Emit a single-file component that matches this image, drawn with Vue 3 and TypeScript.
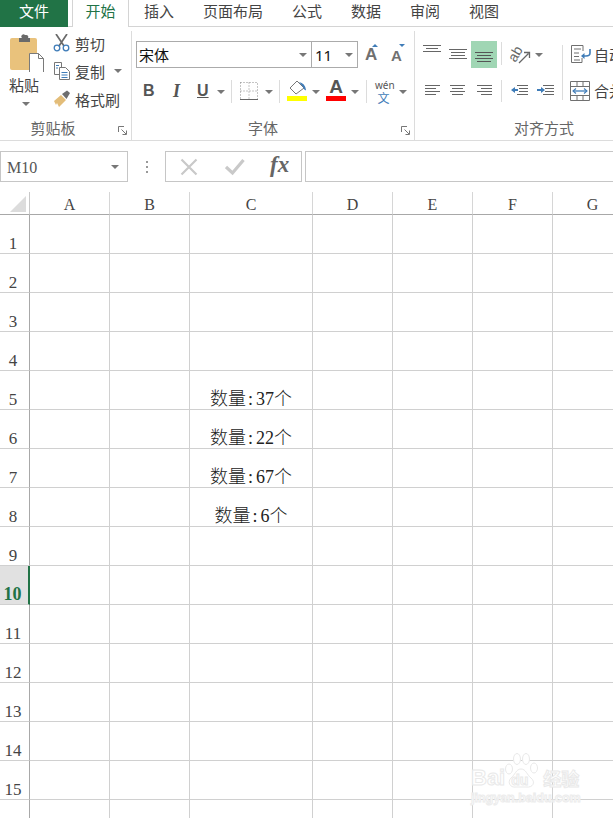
<script setup lang="ts">
const tabs: string[] = ['插入', '页面布局', '公式', '数据', '审阅', '视图']
const columns: string[] = ['A', 'B', 'C', 'D', 'E', 'F', 'G']
const rows: number[] = Array.from({ length: 16 }, (_, i) => i + 1)
const quantities: Record<number, string> = { 5: '37', 6: '22', 7: '67', 8: '6' }
</script>

<template>
  <div class="app">
    <div class="tabs">
      <div class="tab-file">文件</div>
      <div class="tab-active">开始</div>
      <div v-for="t in tabs" :key="t" class="tab">{{ t }}</div>
    </div>

    <div class="ribbon">
      <section class="group g-clip">
        <div class="body clip-body">
          <div class="paste">
            <svg width="36" height="38" viewBox="0 0 36 38">
              <rect x="1" y="4" width="27" height="32" rx="2" fill="#e9c27c" />
              <path d="M10 4 h3 a2 2 0 0 1 3 -3 h1 a2 2 0 0 1 2 3 h2 v4 h-11z" fill="#6a6a6a" />
              <path d="M20.5 19.5 h9 l5 5 v14 h-14z" fill="#fff" stroke="#7a7a7a" />
              <path d="M29.5 19.5 v5 h5" fill="none" stroke="#7a7a7a" />
            </svg>
            <div class="paste-label">粘贴</div>
            <i class="caret paste-caret"></i>
          </div>
          <div class="clip-list">
            <div class="clip-row">
              <svg width="18" height="18" viewBox="0 0 18 18">
                <path d="M3 0 L11 12 M14 0 L6 12" stroke="#6a6a6a" stroke-width="1.7" fill="none" />
                <circle cx="4" cy="14" r="2.8" fill="none" stroke="#3f7cb8" stroke-width="1.3" />
                <circle cx="13" cy="14" r="2.8" fill="none" stroke="#3f7cb8" stroke-width="1.3" />
              </svg>
              <span>剪切</span>
            </div>
            <div class="clip-row">
              <svg width="18" height="18" viewBox="0 0 18 18">
                <path d="M1.500 .5 h7 v12 h-7z" fill="#fff" stroke="#777" />
                <path d="M6.500 5.500 h6 l4 4 v8 h-10z" fill="#fff" stroke="#777" />
                <path d="M3 3.500 h3 M3 6 h2 M8.500 10.500 h6 M8.500 13 h6 M8.500 15.500 h6" stroke="#3f7cb8" />
              </svg>
              <span>复制</span>
              <i class="caret copy-caret"></i>
            </div>
            <div class="clip-row">
              <svg width="18" height="18" viewBox="0 0 18 18">
                <path d="M1 11 L8 5 L13 10 L6 17 L4 13 L3 15z" fill="#e3bd79" />
                <path d="M9 4 L14 0.500 L17 3 L13.500 9z" fill="#6e6e6e" />
              </svg>
              <span>格式刷</span>
            </div>
          </div>
        </div>
        <div class="label">剪贴板</div>
        <svg class="launcher" width="9" height="9" viewBox="0 0 9 9"><path d="M.5 6 V.5 H6 M3.500 3.500 L8 8 M8.500 4.500 V8.500 H4.500" fill="none" stroke="#777" /></svg>
      </section>

      <section class="group g-font">
        <div class="body">
          <div class="font-row">
            <div class="select font-name"><span>宋体</span><i class="caret"></i></div>
            <div class="select font-size"><span>11</span><i class="caret"></i></div>
            <div class="grow-a">A<i class="tick tick-up"></i></div>
            <div class="grow-a small-a">A<i class="tick tick-down"></i></div>
          </div>
          <div class="style-row">
            <b class="fmt bold">B</b>
            <i class="fmt italic">I</i>
            <span class="fmt under">U</span>
            <i class="caret c-under"></i>
            <i class="vsep s1"></i>
            <svg class="border-ico" width="18" height="18" viewBox="0 0 18 18">
              <path d="M.5 .5 H17.500 V17.500 M9 .5 V17.500 M.5 9 H17.500 M.5 .5 V17.500" fill="none" stroke="#8a8a8a" stroke-dasharray="1 2" />
              <path d="M0 17.500 H18" stroke="#666" />
            </svg>
            <i class="caret c-border"></i>
            <i class="vsep s2"></i>
            <svg class="fill-ico" width="20" height="22" viewBox="0 0 20 22">
              <path d="M10 1 L17 8 L9 14 L3 8z" fill="#fff" stroke="#777" />
              <path d="M12 2 Q18 3 19 10 Q17 11 16 7z" fill="#3f7cb8" />
              <rect x="0" y="16" width="20" height="5" fill="#ffff00" />
            </svg>
            <i class="caret c-fill"></i>
            <div class="color-a">A<i></i></div>
            <i class="caret c-color"></i>
            <i class="vsep s3"></i>
            <div class="wen"><span>wén</span><em>文</em></div>
            <i class="caret c-wen"></i>
          </div>
        </div>
        <div class="label">字体</div>
        <svg class="launcher" width="9" height="9" viewBox="0 0 9 9"><path d="M.5 6 V.5 H6 M3.500 3.500 L8 8 M8.500 4.500 V8.500 H4.500" fill="none" stroke="#777" /></svg>
      </section>

      <section class="group g-align">
        <div class="body align-body">
          <svg class="align-top" width="18" height="8" viewBox="0 0 18 8"><path d="M0 .5 H18 M3 3.500 H15 M0 6.500 H18" stroke="#666" /></svg>
          <svg class="align-mid" width="18" height="11" viewBox="0 0 18 11"><path d="M0 .5 H18 M2 3.500 H16 M2 6.500 H16 M0 9.500 H18" stroke="#666" /></svg>
          <div class="align-active">
            <svg width="18" height="11" viewBox="0 0 18 11"><path d="M0 .5 H18 M2 3.500 H16 M0 6.500 H18 M2 9.500 H16" stroke="#555" /></svg>
          </div>
          <i class="vsep a-s1"></i>
          <svg class="orient" width="22" height="20" viewBox="0 0 22 20">
            <text x="-1" y="14" transform="rotate(-60 7 10)" class="orient-t">ab</text>
            <path d="M10 19 L19.500 9.500 M15 8.500 H20.500 V14" fill="none" stroke="#666" stroke-width="1.300" />
          </svg>
          <i class="caret a-caret"></i>
          <i class="vsep a-s2"></i>
          <svg class="wrap-ico" width="20" height="18" viewBox="0 0 20 18">
            <path d="M.5 .5 H12 V6 M.5 .5 V17.500 H11 V13 M3 4 H10 M3 8 H8 M3 11.500 H8 M3 15 H9" fill="none" stroke="#707070" />
            <path d="M19 4 V8 Q19 11 15 11 H11" fill="none" stroke="#3f7cb8" stroke-width="1.600" />
            <path d="M13.500 8 L10 11 L13.500 14z" fill="#3f7cb8" />
          </svg>
          <span class="align-text t1">自动换行</span>

          <svg class="al a1" width="15" height="11" viewBox="0 0 15 11"><path d="M0 .5 H15 M0 3.500 H11 M0 6.500 H15 M0 9.500 H11" stroke="#666" /></svg>
          <svg class="al a2" width="15" height="11" viewBox="0 0 15 11"><path d="M0 .5 H15 M2 3.500 H13 M0 6.500 H15 M2 9.500 H13" stroke="#666" /></svg>
          <svg class="al a3" width="15" height="11" viewBox="0 0 15 11"><path d="M0 .5 H15 M4 3.500 H15 M0 6.500 H15 M4 9.500 H15" stroke="#666" /></svg>
          <i class="vsep a-s3"></i>
          <svg class="al a4" width="18" height="11" viewBox="0 0 18 11">
            <path d="M7 .5 H18 M9 3.500 H18 M9 6.500 H18 M7 9.500 H18" stroke="#666" />
            <path d="M1 5 L5 2 V4 H8 V6 H5 V8z" fill="#3f7cb8" />
          </svg>
          <svg class="al a5" width="18" height="11" viewBox="0 0 18 11">
            <path d="M7 .5 H18 M9 3.500 H18 M9 6.500 H18 M7 9.500 H18" stroke="#666" />
            <path d="M9 5 L5 2 V4 H1 V6 H5 V8z" fill="#3f7cb8" />
          </svg>
          <svg class="merge-ico" width="20" height="20" viewBox="0 0 20 20">
            <path d="M.5 .5 H19.500 V19.500 H.5z M.5 5.500 H19.500 M.5 14.500 H19.500 M7 .5 V5.500 M13 .5 V5.500 M7 14.500 V19.500 M13 14.500 V19.500" fill="none" stroke="#707070" />
            <path d="M3 10 H17" stroke="#3f7cb8" stroke-width="1.300" />
            <path d="M6 7.500 L3 10 L6 12.500 M14 7.500 L17 10 L14 12.500" fill="none" stroke="#3f7cb8" stroke-width="1.100" />
          </svg>
          <span class="align-text t2">合并后居中</span>
        </div>
        <div class="label">对齐方式</div>
      </section>
    </div>

    <div class="formula">
      <div class="name-box"><span>M10</span><i class="caret"></i></div>
      <div class="dots"><i></i><i></i><i></i></div>
      <div class="fx-box">
        <svg width="18" height="18" viewBox="0 0 18 18"><path d="M1.500 1.500 L16.500 16.500 M16.500 1.500 L1.500 16.500" stroke="#c9c9c9" stroke-width="2.200" /></svg>
        <svg width="20" height="18" viewBox="0 0 20 18"><path d="M1 9 L7.500 15 L18.500 2" fill="none" stroke="#c9c9c9" stroke-width="3.200" /></svg>
        <span class="fx">fx</span>
      </div>
      <div class="input-box"></div>
    </div>

    <div class="sheet">
      <div class="corner"><i></i></div>
      <div v-for="c in columns" :key="c" class="col-head">{{ c }}</div>
      <template v-for="r in rows" :key="r">
        <div class="row-head" :class="{ selected: r === 10 }">{{ r }}</div>
        <div v-for="c in columns" :key="c" class="cell">
          <span v-if="c === 'C' && quantities[r]">数量<span class="colon">:</span><span class="num">{{ quantities[r] }}</span>个</span>
        </div>
      </template>
    </div>

    <div class="watermark">
      <div class="wm-top">
        <span>Bai</span>
        <svg width="34" height="38" viewBox="0 0 34 38">
          <g fill="#fff" stroke="#e9e9e9">
            <ellipse cx="5" cy="17" rx="3.500" ry="5" />
            <ellipse cx="13" cy="7" rx="3.500" ry="5.500" />
            <ellipse cx="22" cy="7" rx="3.500" ry="5.500" />
            <ellipse cx="30" cy="16" rx="3.500" ry="5" />
            <path d="M17 17 C12 17 11 23 7 26 C3 30 6 36 12 35 H22 C29 36 32 30 27 26 C23 23 22 17 17 17z" />
          </g>
        </svg>
        <span class="wm-du">du</span>
        <span class="wm-cn">经验</span>
      </div>
      <div class="wm-url">jingyan.baidu.com</div>
    </div>
  </div>
</template>

<style scoped>
.app {
  position: relative;
  width: 613px;
  height: 818px;
  overflow: hidden;
  background: #fff;
  font-family: "Noto Sans CJK SC", "Noto Sans", sans-serif;
  color: #444;
  font-size: 15px;
}
i { display: block; font-style: normal; }
.caret {
  width: 0;
  height: 0;
  border-left: 4px solid transparent;
  border-right: 4px solid transparent;
  border-top: 4px solid #777;
}

/* tabs */
.tabs {
  display: flex;
  height: 27px;
  border-bottom: 1px solid #d4d4d4;
  box-sizing: border-box;
  line-height: 22px;
}
.tab-file {
  width: 68px;
  height: 27px;
  background: #217346;
  color: #fff;
  text-align: center;
}
.tab-active {
  width: 57px;
  height: 27px;
  margin-left: 4px;
  box-sizing: border-box;
  border: 1px solid #d4d4d4;
  border-top: 0;
  border-bottom: 0;
  background: #fff;
  color: #217346;
  text-align: center;
}
.tab { padding: 0 14px 0 15px; }

/* ribbon */
.ribbon {
  display: flex;
  height: 113px;
  border-bottom: 1px solid #dcdcdc;
  box-sizing: content-box;
}
.group {
  position: relative;
  margin-top: 4px;
  box-sizing: border-box;
  border-right: 1px solid #dcdcdc;
}
.g-clip { width: 132px; }
.g-font { width: 283px; }
.g-align { flex: 1; border-right: 0; }
.body { height: 87px; position: relative; }
.label {
  text-align: center;
  line-height: 20px;
  color: #666;
}
.g-clip .label { padding-right: 25px; }
.g-font .label { padding-right: 20px; }
.g-align .label { padding-left: 60px; }
.launcher { position: absolute; right: 4px; bottom: 5px; }

.clip-body { display: flex; }
.paste { width: 53px; padding: 3px 0 0 9px; box-sizing: border-box; position: relative; }
.paste svg { display: block; }
.paste-label { width: 32px; margin-top: 2px; line-height: 22px; color: #444; }
.paste-caret { margin: 6px 0 0 13px; }
.clip-list { display: flex; flex-direction: column; margin-top: -2px; }
.clip-row { display: flex; align-items: center; height: 28px; gap: 4px; position: relative; }
.clip-row svg { flex: none; }
.copy-caret { position: absolute; left: 61px; top: 12px; }

/* font */
.font-row { display: flex; padding: 10px 0 0 4px; height: 27px; }
.select {
  height: 27px;
  box-sizing: border-box;
  border: 1px solid #ababab;
  display: flex;
  align-items: center;
  justify-content: space-between;
  padding: 0 4px 0 2px;
  color: #111;
  line-height: 22px;
}
.font-name { width: 176px; }
.font-size { width: 47px; margin-left: -1px; padding-left: 3px; font-family: "Noto Sans", sans-serif; }
.grow-a {
  position: relative;
  width: 16px;
  margin-left: 7px;
  font: bold 17px/20px "Liberation Sans", sans-serif;
  color: #707070;
  padding-top: 4px;
}
.small-a { margin-left: 10px; font-size: 15px; padding-top: 5px; }
.tick {
  position: absolute;
  left: 7px;
  top: 3px;
  width: 0;
  height: 0;
  border-left: 3px solid transparent;
  border-right: 3px solid transparent;
}
.tick-up { border-bottom: 3px solid #3f7cb8; }
.tick-down { border-top: 3px solid #3f7cb8; left: 8px; }

.style-row {
  position: relative;
  height: 24px;
  margin-top: 13px;
}
.style-row > * { position: absolute; }
.fmt { font: bold 16px/22px "Liberation Sans", sans-serif; color: #555; top: -1px; }
.bold { left: 11px; }
.italic { left: 41px; font-family: "Liberation Serif", serif; font-style: italic; font-size: 18px; }
.under { left: 65px; text-decoration: underline; }
.c-under { left: 85px; top: 9px; }
.vsep { width: 1px; background: #dcdcdc; }
.s1 { left: 99px; top: -1px; height: 23px; }
.border-ico { left: 108px; top: 1px; }
.c-border { left: 133px; top: 9px; }
.s2 { left: 147px; top: -1px; height: 23px; }
.fill-ico { left: 155px; top: -1px; }
.c-fill { left: 180px; top: 9px; }
.color-a {
  left: 194px;
  top: -4px;
  width: 20px;
  font: bold 19px/19px "Liberation Sans", sans-serif;
  color: #555;
  text-align: center;
}
.color-a i { width: 20px; height: 5px; background: #ff0000; margin-top: 0; }
.c-color { left: 219px; top: 9px; }
.s3 { left: 234px; top: -1px; height: 23px; }
.wen { left: 243px; top: -1px; width: 17px; text-align: center; }
.wen span { display: block; font: 10px/10px "Noto Sans", sans-serif; color: #555; }
.wen em { display: block; font-style: normal; font-size: 12px; line-height: 12px; margin-top: 2px; color: #3f7cb8; }
.c-wen { left: 267px; top: 9px; }

/* align */
.align-body > * { position: absolute; }
.align-top { left: 8px; top: 14px; }
.align-mid { left: 34px; top: 18px; }
.align-active {
  left: 56px;
  top: 10px;
  width: 26px;
  height: 27px;
  background: #a0d6b4;
  display: flex;
  align-items: center;
  justify-content: center;
}
.align-active svg { margin-top: 5px; }
.a-s1 { left: 86px; top: 11px; height: 23px; }
.orient { left: 94px; top: 13px; }
.orient-t { font: 14px "Liberation Sans", sans-serif; fill: #666; }
.a-caret { left: 120px; top: 22px; }
.a-s2 { left: 147px; top: 14px; height: 55px; }
.wrap-ico { left: 156px; top: 14px; }
.align-text { white-space: nowrap; line-height: 22px; color: #444; }
.t1 { left: 179px; top: 13px; }
.al { top: 54px; }
.a1 { left: 10px; }
.a2 { left: 35px; }
.a3 { left: 62px; }
.a-s3 { left: 86px; top: 49px; height: 22px; }
.a4 { left: 95px; }
.a5 { left: 121px; }
.merge-ico { left: 155px; top: 50px; }
.t2 { left: 179px; top: 49px; }

/* formula bar */
.formula {
  display: flex;
  align-items: stretch;
  height: 31px;
  margin-top: 10px;
}
.name-box {
  width: 128px;
  box-sizing: border-box;
  border: 1px solid #c6c6c6;
  display: flex;
  align-items: center;
  justify-content: space-between;
  padding: 0 8px 0 6px;
  font: 16px "Liberation Serif", serif;
  color: #555;
}
.name-box span { padding-top: 3px; }
.dots {
  width: 37px;
  display: flex;
  flex-direction: column;
  align-items: center;
  justify-content: center;
  gap: 3px;
}
.dots i { width: 2px; height: 2px; background: #999; }
.fx-box {
  width: 137px;
  box-sizing: border-box;
  border: 1px solid #c6c6c6;
  display: flex;
  align-items: center;
  padding-left: 14px;
}
.fx-box svg:nth-child(2) { margin-left: 27px; }
.fx {
  margin-left: 25px;
  margin-top: -4px;
  font: italic bold 23px/24px "Liberation Serif", serif;
  color: #666;
}
.input-box {
  flex: 1;
  margin-left: 3px;
  box-sizing: border-box;
  border: 1px solid #c6c6c6;
  border-right: 0;
}

/* sheet */
.sheet {
  display: grid;
  grid-template-columns: 30px 80px 80px 123px 80px 80px 80px 80px;
  grid-template-rows: 23px;
  grid-auto-rows: 39px;
  margin-top: 10px;
  width: 633px;
  font-family: "Liberation Serif", "Noto Sans CJK SC", serif;
}
.corner {
  box-sizing: border-box;
  border-right: 1px solid #c8c8c8;
  border-bottom: 1px solid #a8a8a8;
  position: relative;
}
.corner i {
  position: absolute;
  left: 10px;
  top: 4px;
  width: 0;
  height: 0;
  border-left: 16px solid transparent;
  border-bottom: 16px solid #dcdcdc;
}
.col-head {
  box-sizing: border-box;
  border-right: 1px solid #d6d6d6;
  border-bottom: 1px solid #a8a8a8;
  text-align: center;
  font-size: 16px;
  line-height: 25px;
  color: #444;
}
.row-head {
  box-sizing: border-box;
  border-right: 1px solid #a8a8a8;
  border-bottom: 1px solid #d0d0d0;
  display: flex;
  align-items: flex-end;
  justify-content: center;
  font-size: 17px;
  line-height: 19px;
  color: #444;
  padding-right: 3px;
}
.row-head.selected {
  background: #e1e1e1;
  border-right: 2px solid #217346;
  color: #217346;
  font-weight: bold;
  font-size: 18px;
}
.cell {
  box-sizing: border-box;
  border-right: 1px solid #d0d0d0;
  border-bottom: 1px solid #d0d0d0;
  display: flex;
  align-items: flex-end;
  justify-content: center;
  font: 18px/20px "Liberation Serif", "Noto Sans CJK SC", serif;
  color: #222;
  font-weight: 300;
}
.colon { display: inline-block; width: 9px; text-align: center; }
.num { padding-left: 1px; }

/* watermark */
.watermark {
  position: absolute;
  left: 471px;
  top: 752px;
  width: 112px;
  color: #fff;
  font-family: "Liberation Sans", sans-serif;
  pointer-events: none;
}
.wm-top {
  display: flex;
  align-items: flex-end;
  height: 38px;
  font-size: 22px;
  font-weight: bold;
  line-height: 24px;
  -webkit-text-stroke: 1px #e9e9e9;
}
.wm-top svg { margin: 0 -27px 0 -1px; flex: none; }
.wm-du { font-size: 14px; line-height: 20px; width: 28px; position: relative; }
.wm-cn { margin-left: 4px; font: bold 18px/24px "Noto Sans CJK SC", sans-serif; }
.wm-url {
  font-size: 12.5px;
  font-weight: bold;
  line-height: 14px;
  margin-top: 1px;
  -webkit-text-stroke: 1px #ececec;
  white-space: nowrap;
}
</style>
